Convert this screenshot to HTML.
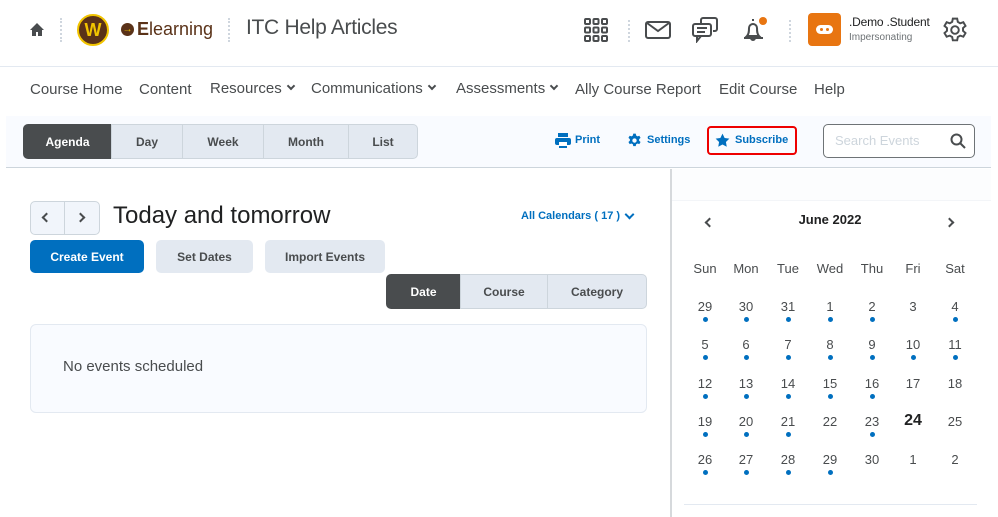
<!DOCTYPE html>
<html><head><meta charset="utf-8"><style>
*{box-sizing:border-box;margin:0;padding:0}
body{width:998px;height:517px;overflow:hidden;background:#fff;font-family:"Liberation Sans",sans-serif;color:#494c4e;position:relative}
.a{position:absolute;white-space:nowrap}
.nav{font-size:15px;color:#494c4e;top:81px}
.chev{display:inline-block;width:6px;height:6px;border-right:2px solid #494c4e;border-bottom:2px solid #494c4e;transform:rotate(45deg);margin-left:6px;position:relative;top:-4px}
.seg{position:absolute;top:124px;height:35px;background:#e3e9f1;border:1px solid #cdd5dc;font-size:12px;font-weight:bold;color:#494c4e;display:flex;align-items:center;justify-content:center}
.btn{position:absolute;height:33px;border-radius:5px;background:#e3e9f1;font-size:12px;font-weight:bold;color:#494c4e;display:flex;align-items:center;justify-content:center}
.d{position:absolute;width:40px;text-align:center;font-size:13px;color:#494c4e}
.dot{position:absolute;width:5px;height:5px;border-radius:50%;background:#006fbf}
</style></head><body>
<svg class="a" style="left:29px;top:22px" width="16" height="15" viewBox="0 0 16 15"><path d="M8 1L1 8h2v6h4v-4h2v4h4V8h2z" fill="#494c4e"/></svg>
<div class="a" style="left:60px;top:18px;width:2px;height:24px;border-left:2px dotted #cfd6de"></div>
<div class="a" style="left:77px;top:14px;width:32px;height:32px;border-radius:50%;background:#5a3218;border:2px solid #f1c400;color:#f1c400;font-weight:bold;font-size:18px;text-align:center;line-height:28px">W</div>
<div class="a" style="left:121px;top:23px;width:13px;height:13px;border-radius:50%;background:#5a3218;color:#f1c400;font-size:10px;line-height:13px;text-align:center;font-weight:bold">→</div>
<div class="a" style="left:137px;top:19px;font-size:18px;color:#5a3218"><b>E</b>learning</div>
<div class="a" style="left:228px;top:18px;width:2px;height:24px;border-left:2px dotted #cfd6de"></div>
<div class="a" style="left:246px;top:16px;font-size:21px;color:#494c4e;letter-spacing:-0.3px">ITC Help Articles</div>
<svg class="a" style="left:584px;top:18px" width="24" height="24" viewBox="0 0 24 24" fill="none" stroke="#494c4e" stroke-width="2"><rect x="1" y="1" width="5" height="5" rx="1"/><rect x="9.5" y="1" width="5" height="5" rx="1"/><rect x="18" y="1" width="5" height="5" rx="1"/><rect x="1" y="9.5" width="5" height="5" rx="1"/><rect x="9.5" y="9.5" width="5" height="5" rx="1"/><rect x="18" y="9.5" width="5" height="5" rx="1"/><rect x="1" y="18" width="5" height="5" rx="1"/><rect x="9.5" y="18" width="5" height="5" rx="1"/><rect x="18" y="18" width="5" height="5" rx="1"/></svg>
<div class="a" style="left:628px;top:20px;width:2px;height:22px;border-left:2px dotted #cfd6de"></div>
<svg class="a" style="left:645px;top:21px" width="26" height="18" viewBox="0 0 26 18" fill="none" stroke="#494c4e" stroke-width="2"><rect x="1" y="1" width="24" height="16" rx="2"/><path d="M2 2l11 8 11-8"/></svg>
<svg class="a" style="left:692px;top:17px" width="26" height="26" viewBox="0 0 26 26" fill="none" stroke="#494c4e" stroke-width="2"><path d="M9 6V3a2 2 0 012-2h12a2 2 0 012 2v9a2 2 0 01-2 2h-2"/><rect x="1" y="7" width="18" height="12" rx="2"/><path d="M5 19v5l4-5M5 11h10M5 15h8"/></svg>
<svg class="a" style="left:741px;top:16px" width="28" height="28" viewBox="0 0 28 28" fill="none" stroke="#494c4e" stroke-width="2"><path d="M12 3v2M6 20c2-2 2-5 2-8a4 4 0 018 0c0 3 0 6 2 8zM3 22h19M10 22a2 2 0 004 0"/><circle cx="22" cy="5" r="4" fill="#e87511" stroke="none"/></svg>
<div class="a" style="left:789px;top:20px;width:2px;height:22px;border-left:2px dotted #cfd6de"></div>
<div class="a" style="left:808px;top:13px;width:33px;height:33px;border-radius:4px;background:#e87511"><div style="position:absolute;left:8px;top:12px;width:17px;height:9px;border-radius:5px;background:#fff"></div><div style="position:absolute;left:12px;top:15px;width:3px;height:3px;border-radius:50%;background:#e87511"></div><div style="position:absolute;left:18px;top:15px;width:3px;height:3px;border-radius:50%;background:#e87511"></div></div>
<div class="a" style="left:849px;top:15px;font-size:12px;color:#202122;letter-spacing:-0.2px">.Demo .Student</div>
<div class="a" style="left:849px;top:32px;font-size:10px;color:#6e7376">Impersonating</div>
<svg class="a" style="left:942px;top:17px" width="26" height="26" viewBox="0 0 24 24" fill="none" stroke="#494c4e" stroke-width="1.8"><circle cx="12" cy="12" r="3.5"/><path d="M10 1.5h4l.6 3 2.2 1.3 2.9-1 2 3.4-2.3 2v2.6l2.3 2-2 3.4-2.9-1-2.2 1.3-.6 3h-4l-.6-3-2.2-1.3-2.9 1-2-3.4 2.3-2v-2.6l-2.3-2 2-3.4 2.9 1L9.4 4.5z"/></svg>
<div class="a" style="left:0;top:66px;width:998px;height:1px;background:#e3e9f1"></div>
<div class="a nav" style="left:30px">Course Home</div>
<div class="a nav" style="left:139px">Content</div>
<div class="a nav" style="left:210px;top:80px">Resources<span class="chev"></span></div>
<div class="a nav" style="left:311px;top:80px">Communications<span class="chev"></span></div>
<div class="a nav" style="left:456px;top:80px">Assessments<span class="chev"></span></div>
<div class="a nav" style="left:575px">Ally Course Report</div>
<div class="a nav" style="left:719px">Edit Course</div>
<div class="a nav" style="left:814px">Help</div>
<div class="a" style="left:6px;top:116px;width:985px;height:52px;background:#f9fbff;border-bottom:1px solid #cdd5dc"></div>
<div class="seg" style="left:23px;width:89px;background:#494c4e;color:#fff;border-color:#494c4e;border-radius:5px 0 0 5px">Agenda</div>
<div class="seg" style="left:111px;width:72px">Day</div>
<div class="seg" style="left:182px;width:82px">Week</div>
<div class="seg" style="left:263px;width:86px">Month</div>
<div class="seg" style="left:348px;width:70px;border-radius:0 5px 5px 0">List</div>
<svg class="a" style="left:555px;top:133px" width="16" height="15" viewBox="0 0 16 15" fill="#006fbf"><rect x="3" y="0" width="10" height="4"/><rect x="0" y="5" width="16" height="7" rx="2"/><rect x="4" y="9" width="8" height="5" fill="#fff"/><rect x="4" y="13" width="8" height="2"/></svg>
<div class="a" style="left:575px;top:134px;font-size:11px;font-weight:bold;color:#006fbf">Print</div>
<svg class="a" style="left:627px;top:133px" width="15" height="15" viewBox="0 0 24 24" fill="#006fbf"><path d="M10 1h4l.6 3 2.2 1.3 2.9-1 2 3.4-2.3 2v2.6l2.3 2-2 3.4-2.9-1-2.2 1.3-.6 3h-4l-.6-3-2.2-1.3-2.9 1-2-3.4 2.3-2v-2.6l-2.3-2 2-3.4 2.9 1L9.4 4z"/><circle cx="12" cy="12" r="3.5" fill="#f9fbff"/></svg>
<div class="a" style="left:647px;top:134px;font-size:11px;font-weight:bold;color:#006fbf">Settings</div>
<div class="a" style="left:707px;top:126px;width:90px;height:29px;border:2px solid #e00;border-radius:4px"></div>
<svg class="a" style="left:715px;top:133px" width="15" height="15" viewBox="0 0 24 24" fill="#006fbf"><path d="M12 1l3.4 7 7.6 1-5.5 5.3 1.3 7.7L12 18.3 5.2 22l1.3-7.7L1 9l7.6-1z"/></svg>
<div class="a" style="left:735px;top:134px;font-size:11px;font-weight:bold;color:#006fbf">Subscribe</div>
<div class="a" style="left:823px;top:124px;width:152px;height:34px;border:1px solid #6e7376;border-radius:5px;background:#fff"></div>
<div class="a" style="left:835px;top:133px;font-size:13px;color:#cdd5dc">Search Events</div>
<svg class="a" style="left:950px;top:133px" width="16" height="16" viewBox="0 0 16 16" fill="none" stroke="#494c4e" stroke-width="2"><circle cx="6.5" cy="6.5" r="5"/><path d="M10 10l5 5"/></svg>
<div class="a" style="left:30px;top:201px;width:70px;height:34px;border:1px solid #cdd5dc;border-radius:5px;background:#f1f5fb"></div>
<div class="a" style="left:64px;top:202px;width:1px;height:32px;background:#cdd5dc"></div>
<div class="a" style="left:43px;top:214px;width:7px;height:7px;border-left:2px solid #494c4e;border-bottom:2px solid #494c4e;transform:rotate(45deg)"></div>
<div class="a" style="left:77px;top:214px;width:7px;height:7px;border-right:2px solid #494c4e;border-top:2px solid #494c4e;transform:rotate(45deg)"></div>
<div class="a" style="left:113px;top:202px;font-size:24px;color:#202122">Today and tomorrow</div>
<div class="a" style="left:521px;top:210px;font-size:11px;font-weight:bold;color:#006fbf">All Calendars ( 17 )</div>
<div class="a" style="left:626px;top:211px;width:7px;height:7px;border-right:2px solid #006fbf;border-bottom:2px solid #006fbf;transform:rotate(45deg)"></div>
<div class="btn" style="left:30px;top:240px;width:114px;background:#006fbf;color:#fff">Create Event</div>
<div class="btn" style="left:156px;top:240px;width:97px">Set Dates</div>
<div class="btn" style="left:265px;top:240px;width:120px">Import Events</div>
<div class="seg" style="left:386px;top:274px;width:75px;background:#494c4e;color:#fff;border-color:#494c4e;border-radius:5px 0 0 5px">Date</div>
<div class="seg" style="left:460px;top:274px;width:88px">Course</div>
<div class="seg" style="left:547px;top:274px;width:100px;border-radius:0 5px 5px 0">Category</div>
<div class="a" style="left:30px;top:324px;width:617px;height:89px;border:1px solid #e3e9f1;border-radius:6px;background:#f9fbff"></div>
<div class="a" style="left:63px;top:358px;font-size:15px;color:#494c4e">No events scheduled</div>
<div class="a" style="left:670px;top:169px;width:2px;height:348px;background:#d6d9dc"></div>
<div class="a" style="left:672px;top:169px;width:319px;height:32px;background:#fcfdfe;border-bottom:1px solid #f3f5f8"></div>
<div class="a" style="left:706px;top:219px;width:7px;height:7px;border-left:2px solid #494c4e;border-bottom:2px solid #494c4e;transform:rotate(45deg)"></div>
<div class="a" style="left:946px;top:219px;width:7px;height:7px;border-right:2px solid #494c4e;border-top:2px solid #494c4e;transform:rotate(45deg)"></div>
<div class="a" style="left:780px;top:212px;width:100px;text-align:center;font-size:13px;font-weight:bold;color:#202122">June 2022</div>
<div id="cal"></div>
<div class="a" style="left:684px;top:504px;width:293px;height:1px;background:#e3e9f1"></div>
<script>
var cx=[705,746,788,830,872,913,955],h=["Sun","Mon","Tue","Wed","Thu","Fri","Sat"],ry=[299,337,376,414,452];
var rows=[[29,30,31,1,2,3,4],[5,6,7,8,9,10,11],[12,13,14,15,16,17,18],[19,20,21,22,23,24,25],[26,27,28,29,30,1,2]];
var dots=[[1,1,1,1,1,0,1],[1,1,1,1,1,1,1],[1,1,1,1,1,0,0],[1,1,1,0,1,0,0],[1,1,1,1,0,0,0]];
var s="";
for(var i=0;i<7;i++)s+='<div class="d" style="left:'+(cx[i]-20)+'px;top:261px">'+h[i]+'</div>';
for(var r=0;r<5;r++)for(var i=0;i<7;i++){var b=(r==3&&i==5);
s+='<div class="d" style="left:'+(cx[i]-20)+'px;top:'+(ry[r]-(b?2:0))+'px;'+(b?'font-size:16px;font-weight:bold;color:#202122':'')+'">'+rows[r][i]+'</div>';
if(dots[r][i])s+='<div class="dot" style="left:'+(cx[i]-2)+'px;top:'+(ry[r]+18)+'px"></div>';}
document.getElementById("cal").innerHTML=s;
</script>
</body></html>
